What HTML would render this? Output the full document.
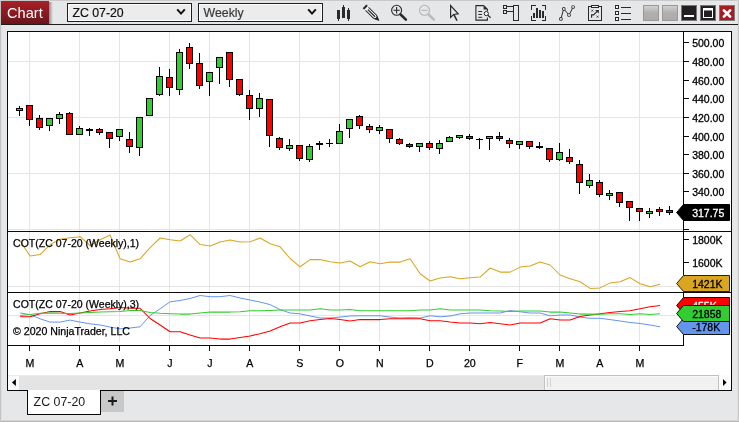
<!DOCTYPE html>
<html><head><meta charset="utf-8"><title>Chart</title>
<style>html,body{margin:0;padding:0;background:#e6e7e8;}body{width:739px;height:422px;overflow:hidden;position:relative;font-family:"Liberation Sans",sans-serif;}</style>
</head><body>
<svg width="739" height="422" viewBox="0 0 739 422" style="position:absolute;left:0;top:0;will-change:transform">
<defs>
<linearGradient id="gTab" x1="0" y1="0" x2="0" y2="1"><stop offset="0" stop-color="#a91f27"/><stop offset="1" stop-color="#6a151b"/></linearGradient>
<linearGradient id="gSh" x1="0" y1="0" x2="1" y2="0"><stop offset="0" stop-color="#8e8e90"/><stop offset="1" stop-color="#e6e7e8"/></linearGradient>
<linearGradient id="gBtn" x1="0" y1="0" x2="0" y2="1"><stop offset="0" stop-color="#d2d0d0"/><stop offset="0.5" stop-color="#b0adad"/><stop offset="1" stop-color="#aeabab"/></linearGradient>
</defs>
<rect x="0" y="0" width="739" height="422" fill="#e6e7e8"/>
<rect x="0" y="0" width="739" height="1" fill="#c9c9ca"/>
<rect x="0" y="0" width="1" height="422" fill="#c4c4c5"/>
<rect x="738" y="0" width="1" height="422" fill="#c6c6c7"/>
<rect x="1" y="0" width="1" height="422" fill="#dfdfe0"/>
<rect x="737" y="0" width="1" height="422" fill="#e1e1e2"/>
<rect x="0" y="420" width="739" height="1" fill="#d2d2d2"/>
<rect x="0" y="421" width="739" height="1" fill="#b9b9b9"/>
<rect x="1" y="24" width="737" height="1" fill="#1c1c1c"/>
<rect x="49" y="2" width="4" height="22" fill="url(#gSh)"/>
<rect x="1" y="1" width="48" height="23" fill="url(#gTab)"/>
<text x="7.0" y="17.7" font-size="14.6" fill="#ffffff" font-family="Liberation Sans, sans-serif">Chart</text>
<rect x="67" y="3" width="125" height="19" fill="#1e1e1e"/>
<rect x="68" y="4" width="123" height="17" fill="#ffffff"/>
<rect x="69" y="5" width="121" height="15" fill="#ececec"/>
<text x="72.4" y="16.7" font-size="12.3" fill="#111" stroke="#111" stroke-width="0.2" font-family="Liberation Sans, sans-serif">ZC 07-20</text>
<path d="M177.2,9.3 L181,13.6 L184.8,9.3" fill="none" stroke="#111" stroke-width="2" stroke-linecap="butt" stroke-linejoin="miter"/>
<rect x="198" y="3" width="125" height="19" fill="#1e1e1e"/>
<rect x="199" y="4" width="123" height="17" fill="#ffffff"/>
<rect x="200" y="5" width="121" height="15" fill="#ececec"/>
<text x="203.6" y="16.7" font-size="12.3" fill="#3a3a3a" stroke="#3a3a3a" stroke-width="0.2" font-family="Liberation Sans, sans-serif">Weekly</text>
<path d="M308.2,9.3 L312,13.6 L315.8,9.3" fill="none" stroke="#111" stroke-width="2" stroke-linecap="butt" stroke-linejoin="miter"/>
<g shape-rendering="crispEdges">
<rect x="337" y="10" width="3" height="9" fill="#2a2a2a"/>
<rect x="338" y="19" width="1" height="2" fill="#2a2a2a"/>
<rect x="342" y="7" width="3" height="11" fill="#2a2a2a"/>
<rect x="343" y="5" width="1" height="2" fill="#2a2a2a"/>
<rect x="347" y="10" width="3" height="9" fill="#2a2a2a"/>
<rect x="348" y="8" width="1" height="2" fill="#2a2a2a"/>
<rect x="348" y="19" width="1" height="2" fill="#2a2a2a"/>
</g>
<g transform="translate(364.7,6.5) rotate(44.6)" fill="#2a2a2a" stroke="none">
<rect x="-0.3" y="-2.6" width="2.4" height="5.2"/>
<rect x="2.1" y="-2.6" width="1.3" height="5.2" fill="#fcfcfc"/>
<path d="M3.3,-2.1 H14.6 L19.4,0 L14.6,2.1 H3.3 Z" fill="#fafafa"/>
<path d="M3.3,-2.1 H14.6 L19.4,0 L14.6,2.1 H3.3" fill="none" stroke="#2a2a2a" stroke-width="1"/>
<rect x="4.4" y="-0.65" width="10.2" height="1.3"/>
<path d="M15.7,-2.0 L20.1,0 L15.7,2.0 Z"/>
</g>
<circle cx="396.6" cy="10.3" r="5" fill="none" stroke="#2a2a2a" stroke-width="1.1"/>
<path d="M393.4,10.3 H399.8 M396.6,7.1 V13.5" stroke="#2a2a2a" stroke-width="1.1" fill="none"/>
<path d="M400.6,14.5 L405.9,19.6" stroke="#2a2a2a" stroke-width="2.6" stroke-linecap="round"/>
<circle cx="424.5" cy="10.3" r="5" fill="none" stroke="#b4b4b4" stroke-width="1.1"/>
<path d="M421.4,10.3 H427.6" stroke="#b4b4b4" stroke-width="1.1" fill="none"/>
<path d="M428.6,14.5 L433.9,19.6" stroke="#bcbcbc" stroke-width="2.6" stroke-linecap="round"/>
<path d="M450.6,5.6 V17.4 L453.6,14.5 L458.2,13.8 Z" fill="none" stroke="#2a2a2a" stroke-width="1.2" stroke-linejoin="miter"/>
<path d="M453.9,14.6 L457.0,20.6" stroke="#2a2a2a" stroke-width="1.5" fill="none"/>
<path d="M483.8,5.6 H475.9 V20.1 H487.4 V17.6 M483.8,5.6 L487.4,9.2 V11.2" fill="none" stroke="#2a2a2a" stroke-width="1.1"/>
<path d="M483.6,5.6 L487.6,9.4 H483.6 Z" fill="#2a2a2a"/>
<path d="M478.3,11.5 H482.2 M478.3,14.4 H482 M478.3,17.3 H482.2" stroke="#2a2a2a" stroke-width="1" fill="none"/>
<circle cx="486.3" cy="13.6" r="2.1" fill="#f2f2f2" stroke="#2a2a2a" stroke-width="1"/>
<path d="M487.9,15.3 L490.6,17.8" stroke="#2a2a2a" stroke-width="1.2"/>
<g fill="none" stroke="#2a2a2a" stroke-width="1" shape-rendering="crispEdges"><rect x="513.5" y="5.5" width="5" height="15"/><rect x="503.5" y="5.5" width="3" height="3"/><rect x="503.5" y="10.5" width="3" height="3"/><path d="M507,6.5 H513 M507,11.5 H513"/></g>
<g fill="none" stroke="#2a2a2a" stroke-width="1" shape-rendering="crispEdges"><path d="M535.5,5.5 H531.5 V9.5 M541.5,5.5 H545.5 V9.5 M531.5,16 V20.5 H535.5 M545.5,16 V20.5 H541.5"/></g>
<g shape-rendering="crispEdges">
<rect x="533" y="13" width="2" height="5" fill="#2a2a2a"/>
<rect x="536" y="8" width="2" height="10" fill="#2a2a2a"/>
<rect x="539" y="10" width="2" height="8" fill="#2a2a2a"/>
<rect x="542" y="11" width="2" height="7" fill="#2a2a2a"/>
</g>
<path d="M561.3,17.6 L563.3,10.2 M564.6,10 L568.2,14 M569.7,13.8 L572.5,8.2" stroke="#2a2a2a" stroke-width="1" fill="none"/>
<circle cx="560.9" cy="18.9" r="1.85" fill="#2a2a2a"/><circle cx="560.9" cy="18.9" r="1.0" fill="#f4f4f4"/>
<circle cx="563.8" cy="8.9" r="1.85" fill="#2a2a2a"/><circle cx="563.8" cy="8.9" r="1.0" fill="#f4f4f4"/>
<circle cx="569.0" cy="15.0" r="1.85" fill="#2a2a2a"/><circle cx="569.0" cy="15.0" r="1.0" fill="#f4f4f4"/>
<circle cx="573.1" cy="7.0" r="1.85" fill="#2a2a2a"/><circle cx="573.1" cy="7.0" r="1.0" fill="#f4f4f4"/>
<g fill="none" stroke="#2a2a2a" stroke-width="1" shape-rendering="crispEdges"><path d="M591.5,6.5 H588.5 V20.5 H601.5 V6.5 H598.5"/><rect x="591.5" y="5.5" width="7" height="2" fill="#f0f0f0"/></g>
<g fill="none" stroke="#2a2a2a" stroke-width="1">
<path d="M591.4,9.7 L593.3,11.6 M593.3,9.7 L591.4,11.6 M596.6,15.7 L598.5,17.6 M598.5,15.7 L596.6,17.6" stroke-width="0.8"/>
<path d="M591.6,17.8 V14.8 H593.6 L597.6,10.9" stroke-width="1.15"/>
<path d="M595.2,10.0 H598.8 V13.6 Z" fill="#2a2a2a" stroke="none"/></g>
<g shape-rendering="crispEdges">
<rect x="615" y="5" width="4" height="4" fill="#2a2a2a"/>
<rect x="616" y="6" width="2" height="2" fill="#f6f6f6"/>
<rect x="621" y="7" width="10" height="1" fill="#2a2a2a"/>
<rect x="615" y="11" width="4" height="4" fill="#2a2a2a"/>
<rect x="616" y="12" width="2" height="2" fill="#f6f6f6"/>
<rect x="621" y="13" width="10" height="1" fill="#2a2a2a"/>
<rect x="615" y="17" width="4" height="4" fill="#2a2a2a"/>
<rect x="616" y="18" width="2" height="2" fill="#f6f6f6"/>
<rect x="621" y="19" width="10" height="1" fill="#2a2a2a"/>
</g>
<rect x="643" y="5" width="16" height="16" fill="#9a9898"/>
<rect x="644" y="6" width="14" height="14" fill="url(#gBtn)"/>
<rect x="662" y="5" width="16" height="16" fill="#9a9898"/>
<rect x="663" y="6" width="14" height="14" fill="url(#gBtn)"/>
<rect x="681" y="5" width="16" height="16" fill="#77777a"/>
<rect x="682" y="6" width="14" height="14" fill="#231f20"/>
<rect x="700" y="5" width="16" height="16" fill="#77777a"/>
<rect x="701" y="6" width="14" height="14" fill="#231f20"/>
<rect x="684" y="15" width="10" height="2" fill="#ffffff"/>
<rect x="703" y="8" width="10" height="10" fill="#ffffff"/>
<rect x="704" y="10" width="8" height="7" fill="#231f20"/>
<rect x="704" y="10" width="8" height="1" fill="#8a8888"/>
<rect x="719" y="5" width="16" height="16" fill="#7f7b7b"/>
<rect x="720" y="6" width="14" height="14" fill="#a81b22"/>
<path d="M723.9,10.4 L730.1,16.6 M730.1,10.4 L723.9,16.6" stroke="#ffffff" stroke-width="2.7" stroke-linecap="round"/>
<rect x="7" y="31" width="725" height="360" fill="#0a0a0a"/>
<rect x="8" y="32" width="723" height="358" fill="#ffffff"/>
<g shape-rendering="crispEdges">
<rect x="29" y="32" width="1" height="310" fill="#e5e5e5"/>
<rect x="79" y="32" width="1" height="310" fill="#e5e5e5"/>
<rect x="119" y="32" width="1" height="310" fill="#e5e5e5"/>
<rect x="169" y="32" width="1" height="310" fill="#e5e5e5"/>
<rect x="209" y="32" width="1" height="310" fill="#e5e5e5"/>
<rect x="249" y="32" width="1" height="310" fill="#e5e5e5"/>
<rect x="299" y="32" width="1" height="310" fill="#e5e5e5"/>
<rect x="339" y="32" width="1" height="310" fill="#e5e5e5"/>
<rect x="379" y="32" width="1" height="310" fill="#e5e5e5"/>
<rect x="429" y="32" width="1" height="310" fill="#e5e5e5"/>
<rect x="469" y="32" width="1" height="310" fill="#e5e5e5"/>
<rect x="519" y="32" width="1" height="310" fill="#e5e5e5"/>
<rect x="559" y="32" width="1" height="310" fill="#e5e5e5"/>
<rect x="599" y="32" width="1" height="310" fill="#e5e5e5"/>
<rect x="639" y="32" width="1" height="310" fill="#e5e5e5"/>
<rect x="8" y="61" width="675" height="1" fill="#e5e5e5"/>
<rect x="8" y="117" width="675" height="1" fill="#e5e5e5"/>
<rect x="8" y="173" width="675" height="1" fill="#e5e5e5"/>
<rect x="8" y="229" width="675" height="1" fill="#e5e5e5"/>
<rect x="8" y="286" width="675" height="1" fill="#e5e5e5"/>
<rect x="8" y="315" width="675" height="1" fill="#e5e5e5"/>
<rect x="8" y="231" width="723" height="1" fill="#0a0a0a"/>
<rect x="8" y="292" width="723" height="1" fill="#0a0a0a"/>
<rect x="683" y="32" width="1" height="314" fill="#0a0a0a"/>
<rect x="8" y="345" width="676" height="1" fill="#0a0a0a"/>
<rect x="684" y="42" width="5" height="1" fill="#0a0a0a"/>
<rect x="684" y="61" width="5" height="1" fill="#0a0a0a"/>
<rect x="684" y="80" width="5" height="1" fill="#0a0a0a"/>
<rect x="684" y="98" width="5" height="1" fill="#0a0a0a"/>
<rect x="684" y="117" width="5" height="1" fill="#0a0a0a"/>
<rect x="684" y="136" width="5" height="1" fill="#0a0a0a"/>
<rect x="684" y="154" width="5" height="1" fill="#0a0a0a"/>
<rect x="684" y="173" width="5" height="1" fill="#0a0a0a"/>
<rect x="684" y="191" width="5" height="1" fill="#0a0a0a"/>
<rect x="684" y="229" width="5" height="1" fill="#0a0a0a"/>
<rect x="684" y="239" width="5" height="1" fill="#0a0a0a"/>
<rect x="684" y="262" width="5" height="1" fill="#0a0a0a"/>
<rect x="29" y="346" width="1" height="5" fill="#0a0a0a"/>
<rect x="79" y="346" width="1" height="5" fill="#0a0a0a"/>
<rect x="119" y="346" width="1" height="5" fill="#0a0a0a"/>
<rect x="169" y="346" width="1" height="5" fill="#0a0a0a"/>
<rect x="209" y="346" width="1" height="5" fill="#0a0a0a"/>
<rect x="249" y="346" width="1" height="5" fill="#0a0a0a"/>
<rect x="299" y="346" width="1" height="5" fill="#0a0a0a"/>
<rect x="339" y="346" width="1" height="5" fill="#0a0a0a"/>
<rect x="379" y="346" width="1" height="5" fill="#0a0a0a"/>
<rect x="429" y="346" width="1" height="5" fill="#0a0a0a"/>
<rect x="469" y="346" width="1" height="5" fill="#0a0a0a"/>
<rect x="519" y="346" width="1" height="5" fill="#0a0a0a"/>
<rect x="559" y="346" width="1" height="5" fill="#0a0a0a"/>
<rect x="599" y="346" width="1" height="5" fill="#0a0a0a"/>
<rect x="639" y="346" width="1" height="5" fill="#0a0a0a"/>
</g>
<text x="692.2" y="46.6" font-size="10.5" fill="#000" stroke="#000" stroke-width="0.3" font-family="Liberation Sans, sans-serif">500.00</text>
<text x="692.2" y="65.6" font-size="10.5" fill="#000" stroke="#000" stroke-width="0.3" font-family="Liberation Sans, sans-serif">480.00</text>
<text x="692.2" y="84.6" font-size="10.5" fill="#000" stroke="#000" stroke-width="0.3" font-family="Liberation Sans, sans-serif">460.00</text>
<text x="692.2" y="103.1" font-size="10.5" fill="#000" stroke="#000" stroke-width="0.3" font-family="Liberation Sans, sans-serif">440.00</text>
<text x="692.2" y="121.6" font-size="10.5" fill="#000" stroke="#000" stroke-width="0.3" font-family="Liberation Sans, sans-serif">420.00</text>
<text x="692.2" y="140.6" font-size="10.5" fill="#000" stroke="#000" stroke-width="0.3" font-family="Liberation Sans, sans-serif">400.00</text>
<text x="692.2" y="158.8" font-size="10.5" fill="#000" stroke="#000" stroke-width="0.3" font-family="Liberation Sans, sans-serif">380.00</text>
<text x="692.2" y="177.8" font-size="10.5" fill="#000" stroke="#000" stroke-width="0.3" font-family="Liberation Sans, sans-serif">360.00</text>
<text x="692.2" y="195.6" font-size="10.5" fill="#000" stroke="#000" stroke-width="0.3" font-family="Liberation Sans, sans-serif">340.00</text>
<text x="692.2" y="243.6" font-size="10.5" fill="#000" stroke="#000" stroke-width="0.3" font-family="Liberation Sans, sans-serif">1800K</text>
<text x="692.2" y="266.9" font-size="10.5" fill="#000" stroke="#000" stroke-width="0.3" font-family="Liberation Sans, sans-serif">1600K</text>
<text x="29.8" y="367" font-size="10.6" fill="#000" stroke="#000" stroke-width="0.25" text-anchor="middle" font-family="Liberation Sans, sans-serif">M</text>
<text x="79.8" y="367" font-size="10.6" fill="#000" stroke="#000" stroke-width="0.25" text-anchor="middle" font-family="Liberation Sans, sans-serif">A</text>
<text x="119.8" y="367" font-size="10.6" fill="#000" stroke="#000" stroke-width="0.25" text-anchor="middle" font-family="Liberation Sans, sans-serif">M</text>
<text x="169.8" y="367" font-size="10.6" fill="#000" stroke="#000" stroke-width="0.25" text-anchor="middle" font-family="Liberation Sans, sans-serif">J</text>
<text x="209.8" y="367" font-size="10.6" fill="#000" stroke="#000" stroke-width="0.25" text-anchor="middle" font-family="Liberation Sans, sans-serif">J</text>
<text x="249.8" y="367" font-size="10.6" fill="#000" stroke="#000" stroke-width="0.25" text-anchor="middle" font-family="Liberation Sans, sans-serif">A</text>
<text x="299.8" y="367" font-size="10.6" fill="#000" stroke="#000" stroke-width="0.25" text-anchor="middle" font-family="Liberation Sans, sans-serif">S</text>
<text x="339.8" y="367" font-size="10.6" fill="#000" stroke="#000" stroke-width="0.25" text-anchor="middle" font-family="Liberation Sans, sans-serif">O</text>
<text x="379.8" y="367" font-size="10.6" fill="#000" stroke="#000" stroke-width="0.25" text-anchor="middle" font-family="Liberation Sans, sans-serif">N</text>
<text x="429.8" y="367" font-size="10.6" fill="#000" stroke="#000" stroke-width="0.25" text-anchor="middle" font-family="Liberation Sans, sans-serif">D</text>
<text x="469.8" y="367" font-size="10.6" fill="#000" stroke="#000" stroke-width="0.25" text-anchor="middle" font-family="Liberation Sans, sans-serif">20</text>
<text x="519.8" y="367" font-size="10.6" fill="#000" stroke="#000" stroke-width="0.25" text-anchor="middle" font-family="Liberation Sans, sans-serif">F</text>
<text x="559.8" y="367" font-size="10.6" fill="#000" stroke="#000" stroke-width="0.25" text-anchor="middle" font-family="Liberation Sans, sans-serif">M</text>
<text x="599.8" y="367" font-size="10.6" fill="#000" stroke="#000" stroke-width="0.25" text-anchor="middle" font-family="Liberation Sans, sans-serif">A</text>
<text x="639.8" y="367" font-size="10.6" fill="#000" stroke="#000" stroke-width="0.25" text-anchor="middle" font-family="Liberation Sans, sans-serif">M</text>
<polyline points="20.1,241.0 30.1,256.0 40.1,254.6 50.1,244.6 60.1,239.2 70.1,237.7 80.1,236.7 90.1,245.5 100.1,239.7 110.1,235.0 120.1,258.8 130.1,262.1 140.1,258.8 150.1,247.6 160.1,238.0 170.1,239.7 180.1,241.0 190.1,234.7 200.1,244.6 210.1,246.0 220.1,242.1 230.1,240.0 240.1,241.9 250.1,241.8 260.1,238.0 270.1,243.8 280.1,246.8 290.1,258.5 300.1,266.8 310.1,259.6 320.1,259.6 330.1,261.8 340.1,263.0 350.1,261.0 360.1,266.8 370.1,261.8 380.1,263.8 390.1,262.1 400.1,262.1 410.1,258.8 420.1,273.8 430.1,281.0 440.1,278.0 450.1,276.8 460.1,278.8 470.1,277.8 480.1,277.1 490.1,268.0 500.1,272.1 510.1,272.1 520.1,267.1 530.1,266.0 540.1,262.1 550.1,265.0 560.1,275.0 570.1,278.8 580.1,281.8 590.1,288.4 600.1,287.9 610.1,282.9 620.1,281.8 630.1,277.6 640.1,283.8 650.1,286.8 660.1,284.3" fill="none" stroke="#daa520" stroke-width="1.05" stroke-linejoin="round"/>
<polyline points="20.1,313.0 30.1,314.6 40.1,318.8 50.1,322.1 60.1,322.1 70.1,320.1 80.1,322.1 90.1,323.8 100.1,325.0 110.1,327.1 120.1,328.8 130.1,328.0 140.1,326.8 150.1,315.5 160.1,308.8 170.1,301.8 180.1,300.5 190.1,298.5 200.1,295.5 210.1,296.7 220.1,296.7 230.1,295.5 240.1,298.0 250.1,300.0 260.1,302.1 270.1,304.6 280.1,309.6 290.1,313.0 300.1,313.8 310.1,316.0 320.1,318.0 330.1,318.0 340.1,317.1 350.1,316.0 360.1,315.8 370.1,315.8 380.1,315.8 390.1,317.1 400.1,318.0 410.1,317.6 420.1,318.0 430.1,315.8 440.1,316.8 450.1,316.0 460.1,313.8 470.1,313.0 480.1,313.0 490.1,313.0 500.1,313.0 510.1,310.5 520.1,311.8 530.1,313.0 540.1,313.0 550.1,315.8 560.1,315.0 570.1,315.0 580.1,317.1 590.1,318.3 600.1,318.3 610.1,319.6 620.1,321.0 630.1,322.5 640.1,323.5 650.1,325.0 660.1,326.8" fill="none" stroke="#6495ed" stroke-width="1.0" stroke-linejoin="round"/>
<polyline points="20.1,316.8 30.1,316.8 40.1,313.8 50.1,311.6 60.1,311.6 70.1,315.0 80.1,313.0 90.1,311.0 100.1,309.6 110.1,308.8 120.1,307.5 130.1,308.3 140.1,308.3 150.1,318.5 160.1,325.0 170.1,331.8 180.1,331.8 190.1,335.1 200.1,338.0 210.1,338.0 220.1,339.1 230.1,339.1 240.1,337.6 250.1,335.9 260.1,333.8 270.1,330.9 280.1,326.8 290.1,323.0 300.1,323.0 310.1,320.8 320.1,319.6 330.1,318.5 340.1,319.6 350.1,321.0 360.1,319.6 370.1,319.6 380.1,319.6 390.1,318.8 400.1,318.8 410.1,318.8 420.1,318.8 430.1,320.8 440.1,320.8 450.1,322.1 460.1,323.0 470.1,323.0 480.1,323.8 490.1,322.6 500.1,323.8 510.1,325.0 520.1,323.0 530.1,323.0 540.1,323.0 550.1,318.8 560.1,320.0 570.1,320.0 580.1,316.6 590.1,315.0 600.1,313.8 610.1,312.6 620.1,311.6 630.1,310.8 640.1,308.8 650.1,306.8 660.1,305.5" fill="none" stroke="#ff0000" stroke-width="1.05" stroke-linejoin="round"/>
<polyline points="20.1,315.5 30.1,314.6 40.1,313.3 50.1,313.0 60.1,313.3 70.1,313.5 80.1,313.0 90.1,312.5 100.1,312.1 110.1,311.8 120.1,311.6 130.1,310.5 140.1,310.5 150.1,312.5 160.1,313.3 170.1,313.8 180.1,314.1 190.1,314.1 200.1,313.0 210.1,312.1 220.1,312.1 230.1,312.1 240.1,311.8 250.1,310.8 260.1,310.8 270.1,310.5 280.1,310.0 290.1,310.0 300.1,310.0 310.1,310.0 320.1,308.8 330.1,310.0 340.1,310.0 350.1,309.6 360.1,310.8 370.1,310.8 380.1,310.8 390.1,310.8 400.1,310.8 410.1,310.8 420.1,310.0 430.1,310.0 440.1,308.8 450.1,310.0 460.1,310.0 470.1,310.0 480.1,310.0 490.1,310.8 500.1,311.0 510.1,311.6 520.1,311.0 530.1,311.0 540.1,311.0 550.1,312.1 560.1,312.1 570.1,313.0 580.1,314.1 590.1,314.1 600.1,314.3 610.1,313.8 620.1,313.8 630.1,314.6 640.1,313.8 650.1,314.6 660.1,313.8" fill="none" stroke="#32cd32" stroke-width="1.05" stroke-linejoin="round"/>
<text x="13.1" y="246.8" font-size="10.53" fill="#000" stroke="#000" stroke-width="0.25" font-family="Liberation Sans, sans-serif">COT(ZC 07-20 (Weekly),1)</text>
<text x="13.1" y="307.8" font-size="10.53" fill="#000" stroke="#000" stroke-width="0.25" font-family="Liberation Sans, sans-serif">COT(ZC 07-20 (Weekly),3)</text>
<text x="13.0" y="335" font-size="10.6" fill="#000" stroke="#000" stroke-width="0.25" font-family="Liberation Sans, sans-serif">© 2020 NinjaTrader, LLC</text>
<g shape-rendering="crispEdges">
<rect x="19" y="106" width="1" height="10" fill="#000"/>
<rect x="16" y="108" width="7" height="3" fill="#000"/>
<rect x="17" y="109" width="5" height="1" fill="#32cd32"/>
<rect x="29" y="105" width="1" height="21" fill="#000"/>
<rect x="26" y="105" width="7" height="15" fill="#000"/>
<rect x="27" y="106" width="5" height="13" fill="#ff0000"/>
<rect x="39" y="115" width="1" height="15" fill="#000"/>
<rect x="36" y="118" width="7" height="10" fill="#000"/>
<rect x="37" y="119" width="5" height="8" fill="#ff0000"/>
<rect x="49" y="118" width="1" height="13" fill="#000"/>
<rect x="46" y="118" width="7" height="8" fill="#000"/>
<rect x="47" y="119" width="5" height="6" fill="#32cd32"/>
<rect x="59" y="112" width="1" height="12" fill="#000"/>
<rect x="56" y="114" width="7" height="5" fill="#000"/>
<rect x="57" y="115" width="5" height="3" fill="#32cd32"/>
<rect x="69" y="112" width="1" height="23" fill="#000"/>
<rect x="66" y="113" width="7" height="22" fill="#000"/>
<rect x="67" y="114" width="5" height="20" fill="#ff0000"/>
<rect x="79" y="126" width="1" height="9" fill="#000"/>
<rect x="76" y="128" width="7" height="7" fill="#000"/>
<rect x="77" y="129" width="5" height="5" fill="#32cd32"/>
<rect x="89" y="128" width="1" height="8" fill="#000"/>
<rect x="86" y="129" width="7" height="2" fill="#000"/>
<rect x="99" y="128" width="1" height="7" fill="#000"/>
<rect x="96" y="129" width="7" height="4" fill="#000"/>
<rect x="97" y="130" width="5" height="2" fill="#ff0000"/>
<rect x="109" y="132" width="1" height="16" fill="#000"/>
<rect x="106" y="132" width="7" height="7" fill="#000"/>
<rect x="107" y="133" width="5" height="5" fill="#ff0000"/>
<rect x="119" y="129" width="1" height="12" fill="#000"/>
<rect x="116" y="129" width="7" height="8" fill="#000"/>
<rect x="117" y="130" width="5" height="6" fill="#32cd32"/>
<rect x="129" y="132" width="1" height="21" fill="#000"/>
<rect x="126" y="139" width="7" height="8" fill="#000"/>
<rect x="127" y="140" width="5" height="6" fill="#ff0000"/>
<rect x="139" y="117" width="1" height="39" fill="#000"/>
<rect x="136" y="117" width="7" height="31" fill="#000"/>
<rect x="137" y="118" width="5" height="29" fill="#32cd32"/>
<rect x="149" y="98" width="1" height="18" fill="#000"/>
<rect x="146" y="98" width="7" height="18" fill="#000"/>
<rect x="147" y="99" width="5" height="16" fill="#32cd32"/>
<rect x="159" y="67" width="1" height="29" fill="#000"/>
<rect x="156" y="76" width="7" height="19" fill="#000"/>
<rect x="157" y="77" width="5" height="17" fill="#32cd32"/>
<rect x="169" y="69" width="1" height="27" fill="#000"/>
<rect x="166" y="77" width="7" height="11" fill="#000"/>
<rect x="167" y="78" width="5" height="9" fill="#ff0000"/>
<rect x="179" y="49" width="1" height="46" fill="#000"/>
<rect x="176" y="52" width="7" height="38" fill="#000"/>
<rect x="177" y="53" width="5" height="36" fill="#32cd32"/>
<rect x="189" y="43" width="1" height="26" fill="#000"/>
<rect x="186" y="47" width="7" height="17" fill="#000"/>
<rect x="187" y="48" width="5" height="15" fill="#ff0000"/>
<rect x="199" y="53" width="1" height="36" fill="#000"/>
<rect x="196" y="63" width="7" height="23" fill="#000"/>
<rect x="197" y="64" width="5" height="21" fill="#ff0000"/>
<rect x="209" y="72" width="1" height="24" fill="#000"/>
<rect x="206" y="72" width="7" height="10" fill="#000"/>
<rect x="207" y="73" width="5" height="8" fill="#32cd32"/>
<rect x="219" y="57" width="1" height="27" fill="#000"/>
<rect x="216" y="57" width="7" height="11" fill="#000"/>
<rect x="217" y="58" width="5" height="9" fill="#32cd32"/>
<rect x="229" y="52" width="1" height="35" fill="#000"/>
<rect x="226" y="52" width="7" height="28" fill="#000"/>
<rect x="227" y="53" width="5" height="26" fill="#ff0000"/>
<rect x="239" y="79" width="1" height="17" fill="#000"/>
<rect x="236" y="79" width="7" height="16" fill="#000"/>
<rect x="237" y="80" width="5" height="14" fill="#ff0000"/>
<rect x="249" y="90" width="1" height="30" fill="#000"/>
<rect x="246" y="95" width="7" height="14" fill="#000"/>
<rect x="247" y="96" width="5" height="12" fill="#ff0000"/>
<rect x="259" y="93" width="1" height="24" fill="#000"/>
<rect x="256" y="98" width="7" height="11" fill="#000"/>
<rect x="257" y="99" width="5" height="9" fill="#32cd32"/>
<rect x="269" y="99" width="1" height="48" fill="#000"/>
<rect x="266" y="99" width="7" height="37" fill="#000"/>
<rect x="267" y="100" width="5" height="35" fill="#ff0000"/>
<rect x="279" y="137" width="1" height="13" fill="#000"/>
<rect x="276" y="138" width="7" height="10" fill="#000"/>
<rect x="277" y="139" width="5" height="8" fill="#ff0000"/>
<rect x="289" y="139" width="1" height="12" fill="#000"/>
<rect x="286" y="145" width="7" height="4" fill="#000"/>
<rect x="287" y="146" width="5" height="2" fill="#32cd32"/>
<rect x="299" y="145" width="1" height="16" fill="#000"/>
<rect x="296" y="145" width="7" height="14" fill="#000"/>
<rect x="297" y="146" width="5" height="12" fill="#ff0000"/>
<rect x="309" y="144" width="1" height="18" fill="#000"/>
<rect x="306" y="146" width="7" height="14" fill="#000"/>
<rect x="307" y="147" width="5" height="12" fill="#32cd32"/>
<rect x="319" y="141" width="1" height="9" fill="#000"/>
<rect x="316" y="143" width="7" height="2" fill="#000"/>
<rect x="329" y="139" width="1" height="8" fill="#000"/>
<rect x="326" y="143" width="7" height="1" fill="#000"/>
<rect x="339" y="124" width="1" height="20" fill="#000"/>
<rect x="336" y="131" width="7" height="13" fill="#000"/>
<rect x="337" y="132" width="5" height="11" fill="#32cd32"/>
<rect x="349" y="119" width="1" height="19" fill="#000"/>
<rect x="346" y="119" width="7" height="10" fill="#000"/>
<rect x="347" y="120" width="5" height="8" fill="#32cd32"/>
<rect x="359" y="115" width="1" height="14" fill="#000"/>
<rect x="356" y="116" width="7" height="10" fill="#000"/>
<rect x="357" y="117" width="5" height="8" fill="#ff0000"/>
<rect x="369" y="124" width="1" height="9" fill="#000"/>
<rect x="366" y="126" width="7" height="4" fill="#000"/>
<rect x="367" y="127" width="5" height="2" fill="#ff0000"/>
<rect x="379" y="125" width="1" height="9" fill="#000"/>
<rect x="376" y="127" width="7" height="4" fill="#000"/>
<rect x="377" y="128" width="5" height="2" fill="#32cd32"/>
<rect x="389" y="129" width="1" height="14" fill="#000"/>
<rect x="386" y="129" width="7" height="10" fill="#000"/>
<rect x="387" y="130" width="5" height="8" fill="#ff0000"/>
<rect x="399" y="138" width="1" height="7" fill="#000"/>
<rect x="396" y="139" width="7" height="5" fill="#000"/>
<rect x="397" y="140" width="5" height="3" fill="#ff0000"/>
<rect x="409" y="143" width="1" height="5" fill="#000"/>
<rect x="406" y="144" width="7" height="3" fill="#000"/>
<rect x="407" y="145" width="5" height="1" fill="#ff0000"/>
<rect x="419" y="143" width="1" height="9" fill="#000"/>
<rect x="416" y="143" width="7" height="4" fill="#000"/>
<rect x="417" y="144" width="5" height="2" fill="#32cd32"/>
<rect x="429" y="141" width="1" height="9" fill="#000"/>
<rect x="426" y="143" width="7" height="5" fill="#000"/>
<rect x="427" y="144" width="5" height="3" fill="#ff0000"/>
<rect x="439" y="140" width="1" height="14" fill="#000"/>
<rect x="436" y="143" width="7" height="6" fill="#000"/>
<rect x="437" y="144" width="5" height="4" fill="#32cd32"/>
<rect x="449" y="136" width="1" height="6" fill="#000"/>
<rect x="446" y="137" width="7" height="5" fill="#000"/>
<rect x="447" y="138" width="5" height="3" fill="#32cd32"/>
<rect x="459" y="135" width="1" height="4" fill="#000"/>
<rect x="456" y="135" width="7" height="3" fill="#000"/>
<rect x="457" y="136" width="5" height="1" fill="#32cd32"/>
<rect x="469" y="134" width="1" height="6" fill="#000"/>
<rect x="466" y="136" width="7" height="3" fill="#000"/>
<rect x="467" y="137" width="5" height="1" fill="#ff0000"/>
<rect x="479" y="138" width="1" height="11" fill="#000"/>
<rect x="476" y="139" width="7" height="1" fill="#000"/>
<rect x="489" y="136" width="1" height="14" fill="#000"/>
<rect x="486" y="136" width="7" height="3" fill="#000"/>
<rect x="487" y="137" width="5" height="1" fill="#32cd32"/>
<rect x="499" y="132" width="1" height="9" fill="#000"/>
<rect x="496" y="136" width="7" height="3" fill="#000"/>
<rect x="497" y="137" width="5" height="1" fill="#ff0000"/>
<rect x="509" y="138" width="1" height="10" fill="#000"/>
<rect x="506" y="140" width="7" height="4" fill="#000"/>
<rect x="507" y="141" width="5" height="2" fill="#ff0000"/>
<rect x="519" y="141" width="1" height="8" fill="#000"/>
<rect x="516" y="141" width="7" height="4" fill="#000"/>
<rect x="517" y="142" width="5" height="2" fill="#32cd32"/>
<rect x="529" y="141" width="1" height="8" fill="#000"/>
<rect x="526" y="141" width="7" height="6" fill="#000"/>
<rect x="527" y="142" width="5" height="4" fill="#ff0000"/>
<rect x="539" y="142" width="1" height="7" fill="#000"/>
<rect x="536" y="146" width="7" height="2" fill="#000"/>
<rect x="549" y="148" width="1" height="14" fill="#000"/>
<rect x="546" y="148" width="7" height="12" fill="#000"/>
<rect x="547" y="149" width="5" height="10" fill="#ff0000"/>
<rect x="559" y="143" width="1" height="18" fill="#000"/>
<rect x="556" y="152" width="7" height="8" fill="#000"/>
<rect x="557" y="153" width="5" height="6" fill="#32cd32"/>
<rect x="569" y="149" width="1" height="15" fill="#000"/>
<rect x="566" y="157" width="7" height="5" fill="#000"/>
<rect x="567" y="158" width="5" height="3" fill="#ff0000"/>
<rect x="579" y="160" width="1" height="34" fill="#000"/>
<rect x="576" y="164" width="7" height="19" fill="#000"/>
<rect x="577" y="165" width="5" height="17" fill="#ff0000"/>
<rect x="589" y="174" width="1" height="14" fill="#000"/>
<rect x="586" y="180" width="7" height="6" fill="#000"/>
<rect x="587" y="181" width="5" height="4" fill="#32cd32"/>
<rect x="599" y="180" width="1" height="17" fill="#000"/>
<rect x="596" y="182" width="7" height="13" fill="#000"/>
<rect x="597" y="183" width="5" height="11" fill="#ff0000"/>
<rect x="609" y="190" width="1" height="10" fill="#000"/>
<rect x="606" y="193" width="7" height="3" fill="#000"/>
<rect x="607" y="194" width="5" height="1" fill="#32cd32"/>
<rect x="619" y="192" width="1" height="15" fill="#000"/>
<rect x="616" y="192" width="7" height="11" fill="#000"/>
<rect x="617" y="193" width="5" height="9" fill="#ff0000"/>
<rect x="629" y="201" width="1" height="20" fill="#000"/>
<rect x="626" y="201" width="7" height="7" fill="#000"/>
<rect x="627" y="202" width="5" height="5" fill="#ff0000"/>
<rect x="639" y="208" width="1" height="13" fill="#000"/>
<rect x="636" y="208" width="7" height="4" fill="#000"/>
<rect x="637" y="209" width="5" height="2" fill="#ff0000"/>
<rect x="649" y="208" width="1" height="10" fill="#000"/>
<rect x="646" y="211" width="7" height="3" fill="#000"/>
<rect x="647" y="212" width="5" height="1" fill="#32cd32"/>
<rect x="659" y="207" width="1" height="9" fill="#000"/>
<rect x="656" y="209" width="7" height="3" fill="#000"/>
<rect x="657" y="210" width="5" height="1" fill="#ff0000"/>
<rect x="669" y="206" width="1" height="9" fill="#000"/>
<rect x="666" y="210" width="7" height="3" fill="#000"/>
<rect x="667" y="211" width="5" height="1" fill="#ff0000"/>
</g>
<path d="M676.6,212.5 L683.5,204.5 H729.5 V220.5 H683.5 Z" fill="#000" stroke="#000" stroke-width="1" stroke-linejoin="miter"/>
<text x="692.2" y="216.7" font-size="10.5" fill="#fff" stroke="#fff" stroke-width="0.3" font-family="Liberation Sans, sans-serif">317.75</text>
<path d="M676.6,283.5 L683.5,275.5 H729.5 V291.5 H683.5 Z" fill="#daa520" stroke="#2a2208" stroke-width="1" stroke-linejoin="miter"/>
<text x="692.2" y="287.7" font-size="10.5" fill="#000" stroke="#000" stroke-width="0.3" font-family="Liberation Sans, sans-serif">1421K</text>
<path d="M676.6,305.5 L683.5,297.5 H729.5 V313.5 H683.5 Z" fill="#ff0000" stroke="#111" stroke-width="1" stroke-linejoin="miter"/>
<text x="692.2" y="309.7" font-size="10.5" fill="#fff" stroke="#fff" stroke-width="0.3" font-family="Liberation Sans, sans-serif">455K</text>
<path d="M676.6,326.5 L683.5,318.5 H729.5 V334.5 H683.5 Z" fill="#6495ed" stroke="#111" stroke-width="1" stroke-linejoin="miter"/>
<text x="692.2" y="330.7" font-size="10.5" fill="#000" stroke="#000" stroke-width="0.3" font-family="Liberation Sans, sans-serif">-178K</text>
<path d="M676.6,313.5 L683.5,305.5 H729.5 V321.5 H683.5 Z" fill="#32cd32" stroke="#111" stroke-width="1" stroke-linejoin="miter"/>
<text x="692.2" y="317.7" font-size="10.5" fill="#000" stroke="#000" stroke-width="0.3" font-family="Liberation Sans, sans-serif">21858</text>
<rect x="8" y="375" width="723" height="15" fill="#e4e4e4"/>
<rect x="8" y="375" width="11" height="15" fill="#fbfbfb"/>
<rect x="719" y="375" width="12" height="15" fill="#fbfbfb"/>
<path d="M11.9,382.5 L15.9,379 V386 Z" fill="#000"/><path d="M726.6,382.5 L723,379 V386 Z" fill="#000"/>
<rect x="544" y="375" width="175" height="15" fill="#c2c2c2"/>
<rect x="545" y="376" width="173" height="14" fill="#f1f1f1"/>
<rect x="545" y="376" width="173" height="1" fill="#fafafa"/>
<rect x="545" y="376" width="1" height="14" fill="#fafafa"/>
<rect x="547" y="378" width="1" height="9" fill="#d4d4d4"/>
<rect x="550" y="378" width="1" height="9" fill="#d4d4d4"/>
<rect x="8" y="375" width="536" height="1" fill="#ececec"/>
<rect x="27" y="390" width="74" height="25" fill="#0a0a0a"/>
<rect x="28" y="390" width="72" height="24" fill="#ffffff"/>
<text x="33.6" y="405.8" font-size="12.4" fill="#1a1a1a" font-family="Liberation Sans, sans-serif">ZC 07-20</text>
<rect x="101" y="391" width="23" height="21" fill="#c8c8c8"/>
<rect x="108" y="400" width="9" height="2" fill="#1a1a1a"/>
<rect x="111.5" y="396.5" width="2" height="9" fill="#1a1a1a"/>
</svg>
</body></html>
